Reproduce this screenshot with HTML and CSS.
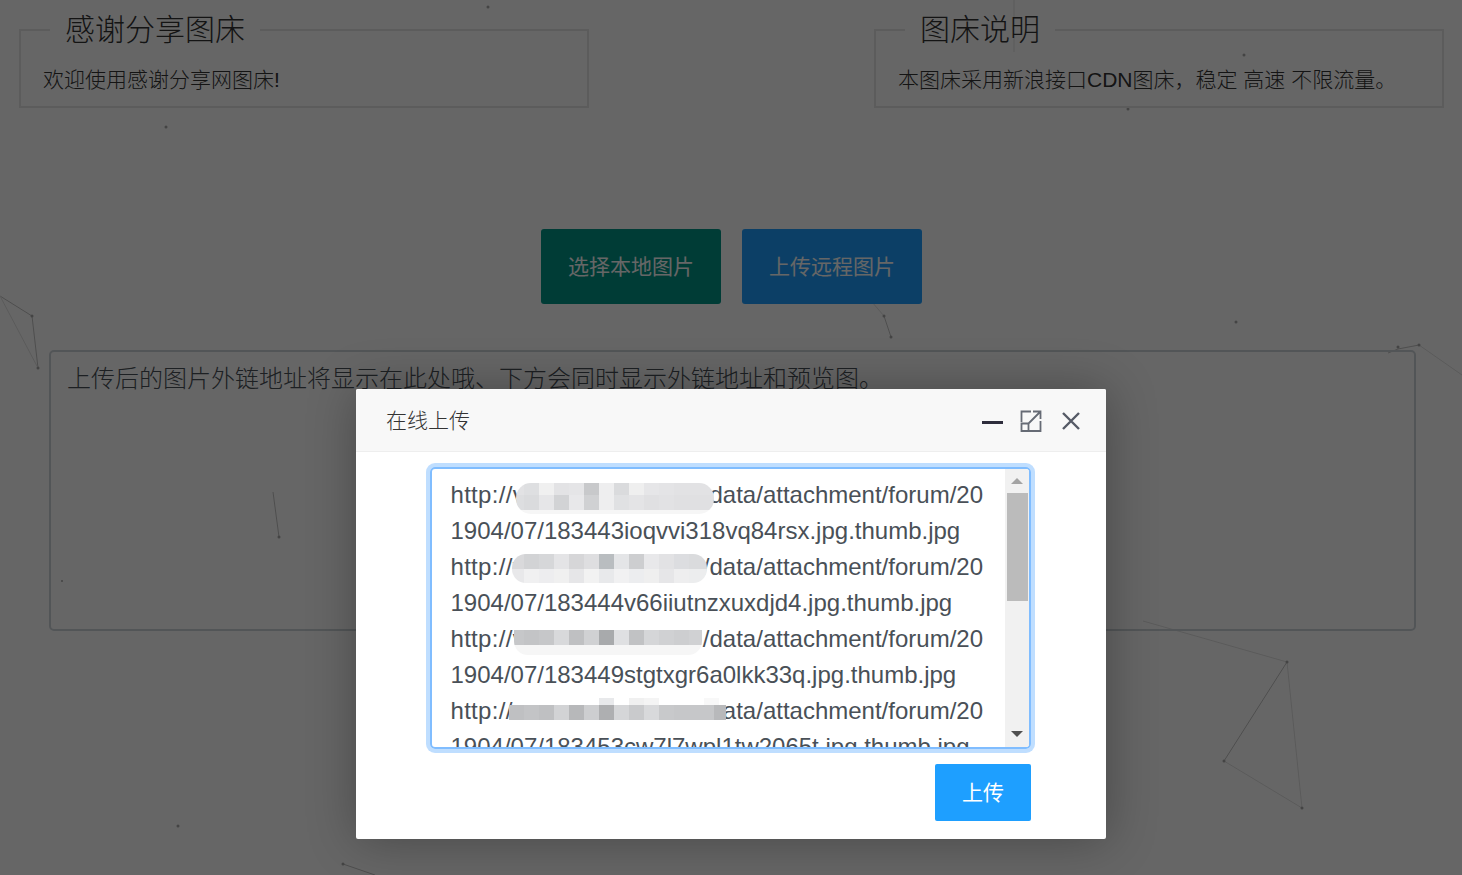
FILE: index.html
```html
<!DOCTYPE html>
<html lang="zh-CN">
<head>
    <meta charset="UTF-8">
    <title>感谢分享图床</title>
    <link rel="stylesheet" href="styles.css">
</head>
<body>
    <!-- particle background -->
    <svg class="particles" width="1462" height="875" viewBox="0 0 1462 875">
        <g class="lines">
            <path d="M0 296L32 316L38 368"/>
            <path d="M273 492L279 537"/>
            <path d="M884 316L891 337"/>
            <path d="M1287 662L1224 761"/>
            <path d="M1388 353L1398 349L1419 345"/>
            <path d="M343 864L375 875"/>
        </g>
        <g class="lines faint">
            <path d="M0 296L38 368"/>
            <path d="M1143 621L1287 662L1302 808L1224 761"/>
            <path d="M1419 345L1462 375"/>
            <path d="M866 295L884 316"/>
            <path d="M1014 0V52"/>
        </g>
        <g class="dots">
            <circle cx="32" cy="316" r="1.5"/>
            <circle cx="38" cy="368" r="1.5"/>
            <circle cx="279" cy="537" r="1.5"/>
            <circle cx="62" cy="581" r="1"/>
            <circle cx="178" cy="826" r="1.5"/>
            <circle cx="166" cy="127" r="1.5"/>
            <circle cx="488" cy="7" r="1.5"/>
            <circle cx="1244" cy="55" r="1.5"/>
            <circle cx="1128" cy="109" r="1.5"/>
            <circle cx="1236" cy="322" r="1.5"/>
            <circle cx="884" cy="316" r="1.5"/>
            <circle cx="891" cy="337" r="1.5"/>
            <circle cx="1287" cy="662" r="1.5"/>
            <circle cx="1224" cy="761" r="1.5"/>
            <circle cx="1302" cy="808" r="1.5"/>
            <circle cx="1398" cy="347" r="1.5"/>
            <circle cx="1419" cy="345" r="1.5"/>
            <circle cx="343" cy="864" r="1.5"/>
        </g>
    </svg>

    <div class="page">
        <div class="notices">
            <fieldset class="notice">
                <legend>感谢分享图床</legend>
                <p>欢迎使用感谢分享网图床!</p>
            </fieldset>
            <fieldset class="notice">
                <legend>图床说明</legend>
                <p>本图床采用新浪接口CDN图床，稳定 高速 不限流量。</p>
            </fieldset>
        </div>

        <div class="actions">
            <button class="btn btn-green">选择本地图片</button>
            <button class="btn btn-blue">上传远程图片</button>
        </div>

        <div class="result">上传后的图片外链地址将显示在此处哦、下方会同时显示外链地址和预览图。</div>
    </div>

    <div class="shade"></div>

    <div class="dialog">
        <div class="dialog-title">
            <span>在线上传</span>
            <div class="dialog-tools">
                <svg class="tool-min" width="21" height="3" viewBox="0 0 21 3"><path d="M0 1.5H21"/></svg>
                <svg class="tool-max" width="22" height="22" viewBox="0 0 22 22">
                    <path d="M11 1.5H1.5V12M1.5 13.5H8.5V21H1.5ZM8.5 21H20.5V11M8.5 13.5L20 2M13 1.5H20.5V9"/>
                </svg>
                <svg class="tool-close" width="18" height="18" viewBox="0 0 18 18"><path d="M1 1L17 17M17 1L1 17"/></svg>
            </div>
        </div>
        <div class="dialog-body">
            <div class="urls">
                <div class="urls-text">
                    <div class="url-row"><span>http://v</span><span>data/attachment/forum/20</span></div>
                    <div>1904/07/183443ioqvvi318vq84rsx.jpg.thumb.jpg</div>
                    <div class="url-row"><span>http://v</span><span>/data/attachment/forum/20</span></div>
                    <div>1904/07/183444v66iiutnzxuxdjd4.jpg.thumb.jpg</div>
                    <div class="url-row"><span>http://v</span><span>/data/attachment/forum/20</span></div>
                    <div>1904/07/183449stgtxgr6a0lkk33q.jpg.thumb.jpg</div>
                    <div class="url-row"><span>http://v</span><span>ata/attachment/forum/20</span></div>
                    <div>1904/07/183453cw7l7wpl1tw2065t.jpg.thumb.jpg</div>
                </div>
                <div class="mosaic mosaic-1"></div>
                <div class="mosaic mosaic-2"></div>
                <div class="mosaic mosaic-3"></div>
                <div class="mosaic mosaic-4"></div>
                <div class="scrollbar">
                    <span class="arrow arrow-up"></span>
                    <span class="thumb"></span>
                    <span class="arrow arrow-down"></span>
                </div>
            </div>
            <button class="btn-upload">上传</button>
        </div>
    </div>
</body>
</html>
```

FILE: styles.css
```css
html, body {
    height: 100%;
}

body {
    margin: 0;
    overflow: hidden;
    position: relative;
    background: #fff;
    color: #333;
    font-family: "Liberation Sans", "Noto Sans CJK SC", sans-serif;
}

/* background canvas */
.particles {
    position: absolute;
    left: 0;
    top: 0;
}

.lines path {
    fill: none;
    stroke: #c3c3c3;
    stroke-width: 1;
}

.lines.faint path {
    stroke: #e2e2e2;
}

.dots circle {
    fill: #aaa;
}

.page {
    position: relative;
    height: 875px;
    box-sizing: border-box;
    padding: 9px 18px 0 19px;
}

.notices {
    display: flex;
    justify-content: space-between;
}

.notice {
    width: 570px;
    height: 99px;
    box-sizing: border-box;
    margin: 0;
    padding: 0 0 0 22px;
    border: 2px solid #e6e6e6;
    border-radius: 0;
    min-width: 0;
}

.notice legend {
    margin-left: 7px;
    padding: 0 15px;
    font-size: 30px;
    line-height: 42px;
    font-weight: 300;
}

.notice p {
    margin: 14px 0 0;
    font-size: 21px;
    line-height: 30px;
    font-weight: 300;
}

.actions {
    display: flex;
    justify-content: center;
    gap: 21px;
    margin-top: 121px;
}

.btn {
    width: 180px;
    height: 75px;
    padding: 0 0 4px;
    border: 0;
    border-radius: 3px;
    color: #fff;
    font-family: inherit;
    font-size: 21px;
    font-weight: 400;
}

.btn-green {
    background: #009688;
}

.btn-blue {
    background: #1e9fff;
}

.result {
    width: 1367px;
    height: 281px;
    box-sizing: border-box;
    margin: 46px 0 0 30px;
    padding: 9px 16px;
    border: 2px solid #ced4da;
    border-radius: 5px;
    color: #495057;
    font-size: 24px;
    line-height: 36px;
    font-weight: 300;
}

.shade {
    position: absolute;
    left: 0;
    top: 0;
    right: 0;
    bottom: 0;
    background: rgba(0, 0, 0, 0.6);
}

/* upload dialog */
.dialog {
    position: absolute;
    left: 356px;
    top: 389px;
    width: 750px;
    height: 450px;
    background: #fff;
    border-radius: 2px;
    box-shadow: 1px 1px 50px rgba(0, 0, 0, 0.3);
}

.dialog-title {
    display: flex;
    justify-content: space-between;
    align-items: center;
    height: 63px;
    box-sizing: border-box;
    padding: 0 26px 3px 30px;
    background: #f8f8f8;
    border-bottom: 1px solid #eee;
    border-radius: 2px 2px 0 0;
    font-size: 21px;
    font-weight: 300;
}

.dialog-tools {
    display: flex;
    align-items: center;
    gap: 17px;
    margin-top: 5px;
}

.dialog-tools svg {
    display: block;
    fill: none;
}

.tool-min {
    margin-top: 2px;
}

.tool-min path {
    stroke: #2e2d3c;
    stroke-width: 3;
}

.tool-max {
    margin-right: 3px;
}

.tool-max path {
    stroke: #666b75;
    stroke-width: 1.8;
}

.tool-close path {
    stroke: #555a66;
    stroke-width: 2.4;
}

.dialog-body {
    display: flex;
    flex-direction: column;
    align-items: flex-end;
    padding: 15px 75px 0 0;
}

.urls {
    position: relative;
    display: flex;
    width: 601px;
    height: 282px;
    box-sizing: border-box;
    border: 2px solid #80bdff;
    border-radius: 5px;
    box-shadow: 0 0 0 4px rgba(0, 123, 255, 0.25);
    overflow: hidden;
    color: #495057;
    font-size: 24px;
    line-height: 36px;
}

.urls-text {
    flex: 1;
    padding: 8px 22px 0 18.5px;
    white-space: nowrap;
    overflow: hidden;
}

.url-row {
    display: flex;
    justify-content: space-between;
}

.url-row span:first-child {
    letter-spacing: 0.3px;
}

.mosaic {
    position: absolute;
}

.mosaic-1 {
    left: 84px;
    top: 14px;
    width: 198px;
    height: 31px;
    border-radius: 15px;
    background:
        linear-gradient(90deg, #e2e2e4 8px, #dedfe1 0 23px, #f0f0f0 0 38px, #e3e3e5 0 53px, #e5e5e7 0 68px, #c8c9cb 0 83px, #eeeeef 0 98px, #dadbdd 0 113px, #efefef 0 128px, #e6e6e8 0 143px, #e4e4e6 0 158px, #e2e2e4 0) top / 100% 12px no-repeat,
        linear-gradient(90deg, #dddee0 8px, #dadbdd 0 23px, #e6e6e8 0 38px, #d2d3d5 0 53px, #e8e8ea 0 68px, #d0d1d3 0 83px, #eeeeef 0 98px, #e0e1e3 0 113px, #e4e4e6 0 128px, #e0e0e2 0 143px, #e2e2e4 0 158px, #e0e0e2 0) 0 12px / 100% 15px no-repeat,
        #f6f6f6;
}

.mosaic-2 {
    left: 80px;
    top: 85px;
    width: 195px;
    height: 29px;
    border-radius: 14px;
    background:
        linear-gradient(90deg, #d9d9db 12px, #d2d3d5 0 27px, #d6d7d9 0 42px, #e4e4e6 0 57px, #d6d6d8 0 72px, #dedee0 0 87px, #b9bdc0 0 102px, #e4e5e7 0 117px, #cdced0 0 132px, #e8e8ea 0 147px, #e2e2e4 0 162px, #dcdde0 0 177px, #dadbdd 0) top / 100% 15px no-repeat,
        linear-gradient(90deg, #e8e8ea 12px, #f0f0f1 0 27px, #ededef 0 42px, #f0f0f0 0 57px, #e6e6e8 0 72px, #f2f2f2 0 87px, #e8e9eb 0 102px, #f1f1f2 0 117px, #ecedef 0 132px, #efefef 0 147px, #e6e6e8 0 162px, #eeeeef 0 177px, #ecedee 0) bottom / 100% 14px no-repeat;
}

.mosaic-3 {
    left: 82px;
    top: 161px;
    width: 188px;
    height: 25px;
    border-radius: 0 0 14px 14px;
    background:
        linear-gradient(90deg, #c6c7c9 10px, #c3c4c6 0 25px, #c6c7c9 0 40px, #d8d9db 0 55px, #bfc0c2 0 70px, #d0d1d3 0 85px, #a8aaac 0 100px, #dfe0e2 0 115px, #c1c2c4 0 130px, #d5d6d8 0 145px, #d0d1d3 0 160px, #cdced0 0 175px, #d0d1d3 0) top / 100% 15px no-repeat,
        #f6f6f6;
}

.mosaic-4 {
    left: 77px;
    top: 229px;
    width: 217px;
    height: 22px;
    background:
        linear-gradient(90deg, transparent 90px, #e8e9eb 0 105px, transparent 0 120px, #f0f0f0 0 135px, #f4f4f4 0 150px, transparent 0 195px, #f8f8f8 0 210px, transparent 0) top / 100% 7px no-repeat,
        linear-gradient(90deg, #bfc0c2 15px, #c3c4c6 0 30px, #bfc0c2 0 45px, #d2d3d5 0 60px, #b7b8ba 0 75px, #cdced0 0 90px, #aeafb1 0 105px, #d5d6d8 0 120px, #c9cacc 0 135px, #d8d9db 0 150px, #c8c9cb 0 165px, #c6c7c9 0 205px, #b8b9bb 0) bottom / 100% 15px no-repeat;
}

/* hand-drawn scrollbar */
.scrollbar {
    display: flex;
    flex-direction: column;
    align-items: center;
    width: 24px;
    background: #f1f1f1;
}

.thumb {
    width: 21px;
    height: 108px;
    margin-top: 9px;
    background: #bbb;
}

.arrow {
    width: 0;
    height: 0;
    border-left: 6px solid transparent;
    border-right: 6px solid transparent;
}

.arrow-up {
    margin-top: 9px;
    border-bottom: 6px solid #a3a3a3;
}

.arrow-down {
    margin-top: 130px;
    border-top: 6px solid #505050;
}

.btn-upload {
    width: 96px;
    height: 57px;
    margin-top: 15px;
    padding: 0 0 4px;
    border: 0;
    border-radius: 2px;
    background: #1e9fff;
    color: #fff;
    font-family: inherit;
    font-size: 21px;
    font-weight: 400;
}
```
